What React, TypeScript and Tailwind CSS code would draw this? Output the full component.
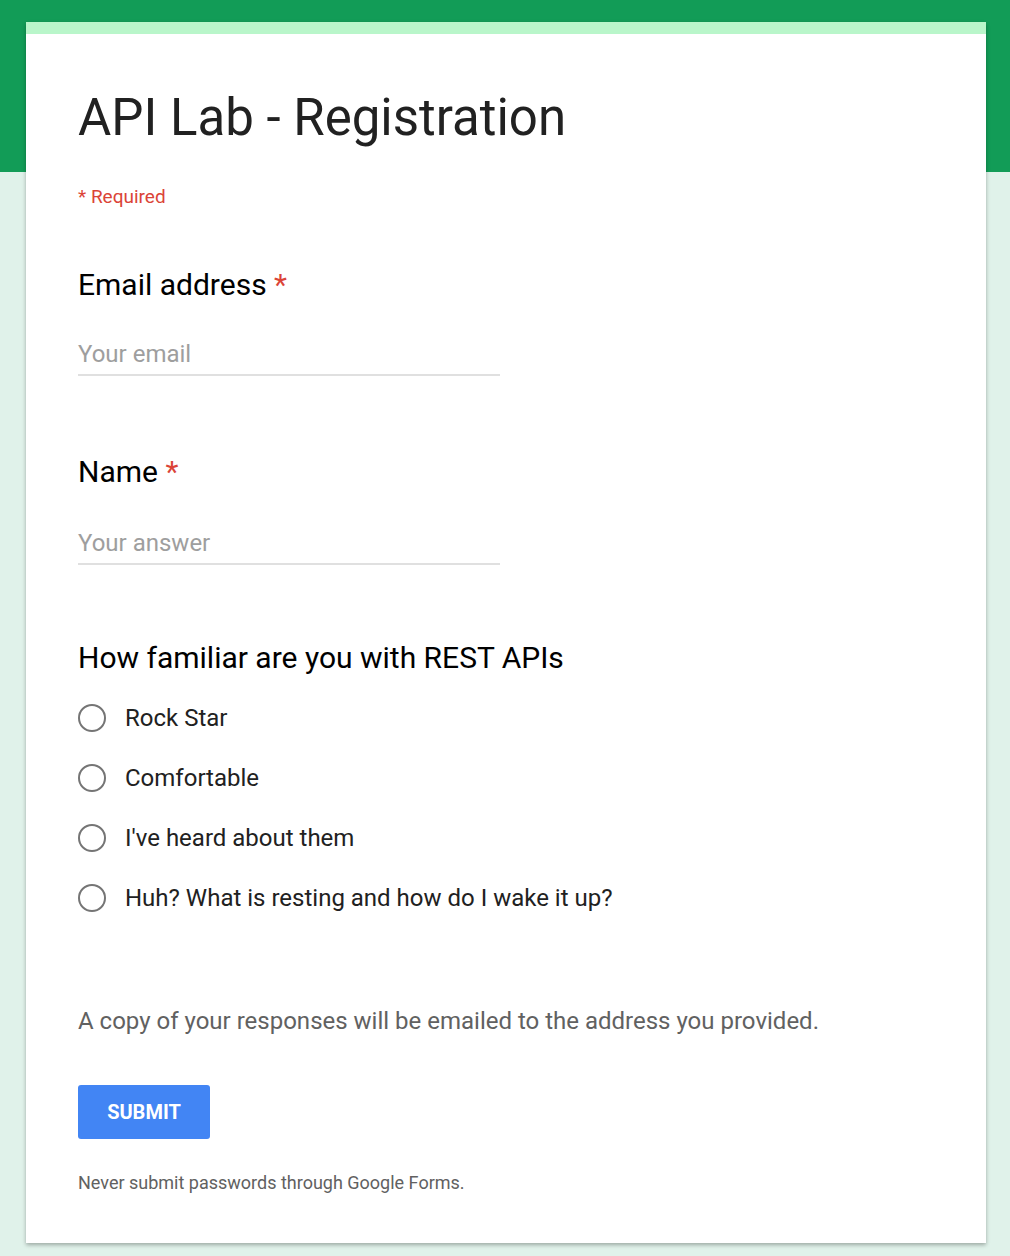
import React from "react";

const Radio = ({ label }: { label: string }) => (
  <div className="flex items-center h-[60px]">
    <div className="w-[28px] h-[28px] rounded-full border-2 border-[#757575] box-border shrink-0" />
    <span className="ml-[19px] text-[24px] text-[#212121]">{label}</span>
  </div>
);

export default function App() {
  return (
    <div className="relative w-[1010px] min-h-[1256px] bg-[#e0f2ea] font-['Roboto',sans-serif]">
      <div className="absolute left-0 top-0 w-full h-[172px] bg-[#129c57]" />
      <div className="relative pt-[22px] pl-[26px] pb-[14px]">
        <div className="w-[960px] bg-white shadow-[0_2px_4px_rgba(0,0,0,0.3)]">
          <div className="h-[12px] bg-[#b9f6ca]" />
          <div className="pl-[52px] pr-[52px]">
            <h1 className="pt-[50px] text-[51px] leading-[68px] text-[#212121] font-normal">API Lab - Registration</h1>
            <div className="mt-[32px] text-[19px] leading-[26px] text-[#db4437]">* Required</div>

            <div className="mt-[55px]">
              <div className="text-[30px] leading-[40px] text-black">
                Email address <span className="text-[#db4437]">*</span>
              </div>
              <div className="mt-[34px] w-[422px] border-b-2 border-[#e0e0e0] pb-[5px] text-[24px] leading-[30px] text-[#9e9e9e]">
                Your email
              </div>
            </div>

            <div className="mt-[76px]">
              <div className="text-[30px] leading-[40px] text-black">
                Name <span className="text-[#db4437]">*</span>
              </div>
              <div className="mt-[36px] w-[422px] border-b-2 border-[#e0e0e0] pb-[5px] text-[24px] leading-[30px] text-[#9e9e9e]">
                Your answer
              </div>
            </div>

            <div className="mt-[73px]">
              <div className="text-[30px] leading-[40px] text-black">How familiar are you with REST APIs</div>
              <div className="mt-[10px]">
                <Radio label="Rock Star" />
                <Radio label="Comfortable" />
                <Radio label="I've heard about them" />
                <Radio label="Huh? What is resting and how do I wake it up?" />
              </div>
            </div>

            <div className="mt-[77px] text-[24px] leading-[32px] text-[#616161]">
              A copy of your responses will be emailed to the address you provided.
            </div>
            <button className="mt-[48px] w-[132px] h-[54px] rounded-[3px] bg-[#4285f4] text-white text-[20px] font-bold">
              SUBMIT
            </button>
            <div className="mt-[32px] pb-[48px] text-[18px] leading-[24px] text-[#616161]">
              Never submit passwords through Google Forms.
            </div>
          </div>
        </div>
      </div>
    </div>
  );
}
